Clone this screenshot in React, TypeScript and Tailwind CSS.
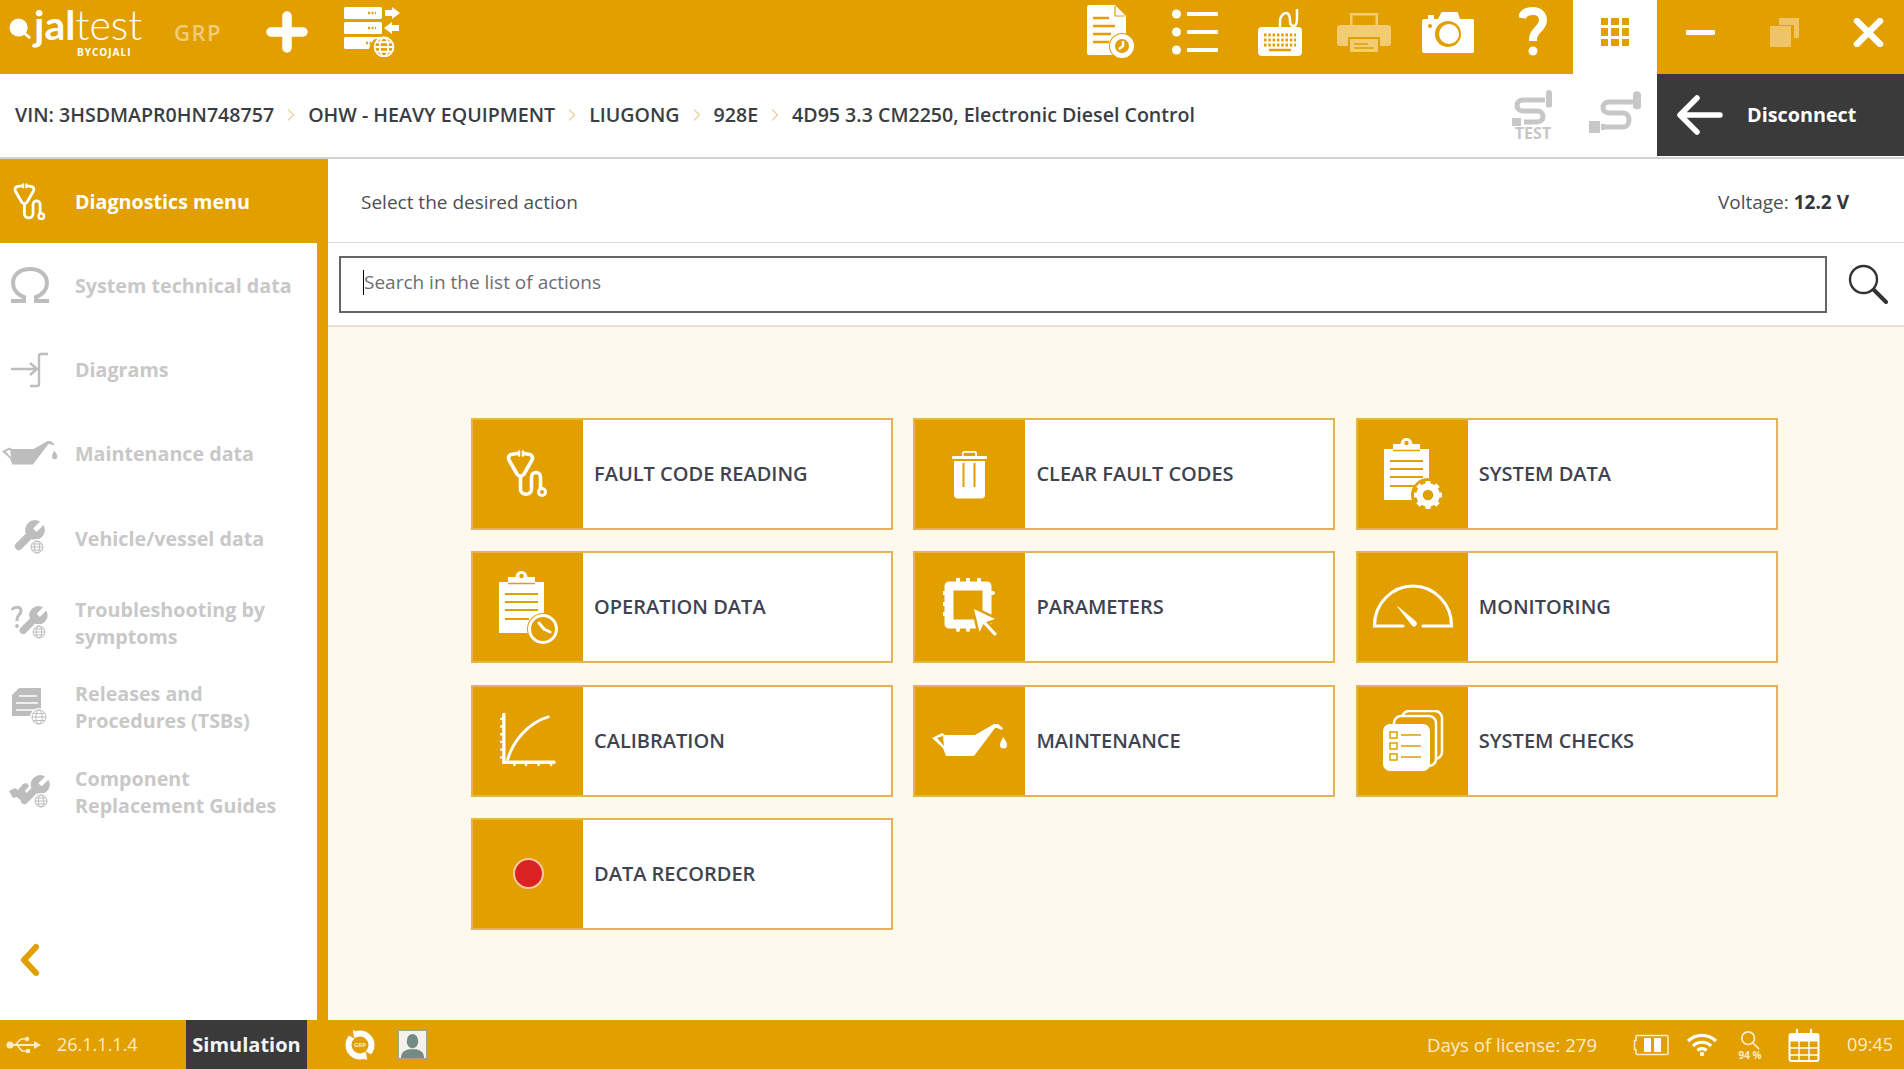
import type { ReactNode } from "react";
import { ChevronRight } from "lucide-react";

const WRENCH =
  "M14.7 6.3a1 1 0 0 0 0 1.4l1.6 1.6a1 1 0 0 0 1.4 0l3.77-3.77a6 6 0 0 1-7.94 7.94l-6.91 6.91a2.12 2.12 0 0 1-3-3l6.91-6.91a6 6 0 0 1 7.94-7.94l-3.76 3.76z";

function Globe({ cx, cy, r, sw = 1 }: { cx: number; cy: number; r: number; sw?: number }) {
  return (
    <g fill="none" stroke="currentColor" strokeWidth={sw}>
      <circle cx={cx} cy={cy} r={r} />
      <ellipse cx={cx} cy={cy} rx={r * 0.45} ry={r} />
      <path d={`M${cx - r} ${cy}h${2 * r}M${cx - r * 0.85} ${cy - r * 0.5}h${1.7 * r}M${cx - r * 0.85} ${cy + r * 0.5}h${1.7 * r}`} />
    </g>
  );
}

function Stethoscope({ className }: { className?: string }) {
  return (
    <svg viewBox="0 0 42 48" className={className} fill="none" stroke="currentColor" strokeWidth="3.600" strokeLinecap="round" strokeLinejoin="round">
      <path d="M11 3.500 5 4.500C2.500 5.500 2 8 3 10l8 14c2 3 5 3 7 0l8-14c1-2 .5-4.500-2-5.500l-6-1" />
      <path d="M14.500 26v13c0 7 11 7 11 0V27c0-6 9-6 9 0v11" />
      <circle cx="36" cy="42" r="3.500" strokeWidth="3" />
      <path d="M13 1.500v4M17 1.500v4" strokeWidth="2.500" />
    </svg>
  );
}

function Trash({ className }: { className?: string }) {
  return (
    <svg viewBox="0 0 35 49" className={className} fill="currentColor">
      <path d="M10 6V3.500C10 2 11 1 12.500 1h10C24 1 25 2 25 3.500V6h-1.800V3.500c0-.5-.3-.8-.8-.8h-10c-.5 0-.8.3-.8.8V6z" />
      <rect x="0" y="6" width="35" height="3" rx="1" />
      <path d="M2 11h31v34c0 2-1.500 3.500-3.500 3.500h-24C3.500 48.500 2 47 2 45z" />
      <path d="M11.500 13v24M22.500 13v24" stroke="#e19f00" strokeWidth="2" />
    </svg>
  );
}

function Clipboard({ className, badge }: { className?: string; badge: "clock" | "gear" }) {
  return (
    <svg viewBox="0 0 60 74" className={className}>
      <path fill="currentColor" d="M0 12h9V7h7.500C17 3 19.500 1 22.500 1s5.500 2 6 6H36v5h9v51H0z" />
      <circle cx="22.500" cy="6" r="2.200" fill="#e19f00" />
      <path d="M9 13.500h27" stroke="#e19f00" strokeWidth="1.500" />
      <path d="M6 24h33M6 32h33M6 40h33M6 49h24" stroke="#e19f00" strokeWidth="1.800" />
      {badge === "clock" ? (
        <g>
          <circle cx="44" cy="59" r="16" fill="#e19f00" />
          <circle cx="44" cy="59" r="13.500" fill="none" stroke="currentColor" strokeWidth="3" />
          <path d="M40 53l5 6 6 3" fill="none" stroke="currentColor" strokeWidth="3" strokeLinecap="round" />
        </g>
      ) : (
        <g>
          <circle cx="44" cy="58" r="17" fill="#e19f00" />
          <circle cx="44" cy="58" r="8.500" fill="none" stroke="currentColor" strokeWidth="6.500" />
          <path d="M44 44v6M44 66v6M30 58h6M52 58h6M34 48l4 4M50 64l4 4M54 48l-4 4M38 64l-4 4" stroke="currentColor" strokeWidth="5" />
        </g>
      )}
    </svg>
  );
}

function Chip({ className }: { className?: string }) {
  return (
    <svg viewBox="0 0 54 58" className={className} fill="none" stroke="currentColor">
      <path d="M6 8h38v38H6z" strokeWidth="9" strokeLinejoin="round" />
      <path d="M15 0v8M25 0v8M36 0v8M0 15h8M0 26h8M0 36h8M42 15h8M15 46v6M25 46v6" strokeWidth="4" strokeLinecap="round" />
      <path d="M31 31l21 10-9 3 11 12-2.500 2-11-12-4 8z" fill="#e19f00" stroke="#e19f00" strokeWidth="5" />
      <path d="M31 31l21 10-9 3 11 12-2.500 2-11-12-4 8z" fill="currentColor" stroke="none" />
    </svg>
  );
}

function Gauge({ className }: { className?: string }) {
  return (
    <svg viewBox="0 0 82 46" className={className} fill="none" stroke="currentColor" strokeWidth="3.200" strokeLinecap="round">
      <path d="M31 42H2.500C2 20 20 2 41 2s39 18 38.500 40H51" />
      <path d="M26 23l14 18c2 3 6 0 4-3z" fill="currentColor" strokeWidth="1" strokeLinejoin="round" />
    </svg>
  );
}

function Curve({ className }: { className?: string }) {
  return (
    <svg viewBox="0 0 56 58" className={className} fill="none" stroke="currentColor" strokeWidth="2.600" strokeLinecap="round">
      <path d="M3 1v50h52" strokeWidth="3.400" />
      <path d="M0 6h3M0 14h3M0 22h3M0 30h3M0 38h3M0 46h3M14 51v3M26 51v3M39 51v3M52 51v3" strokeWidth="2.400" />
      <path d="M7 48C12 30 28 10 49 4" strokeWidth="3" />
    </svg>
  );
}

function OilCan({ className }: { className?: string }) {
  return (
    <svg viewBox="0 0 76 34" className={className} fill="currentColor">
      <path
        fillRule="evenodd"
        d="M0 14l10-5 3 2h30L62 0h4l5 4-1 2-5-2-2 0-21 28H14l-3-8zM5 14l7 8-1-10z"
      />
      <path d="M71 13c2 3 4 5 4 8a3.500 3.500 0 0 1-7 0c0-3 2-5 3-8z" />
    </svg>
  );
}

function Checks({ className }: { className?: string }) {
  return (
    <svg viewBox="0 0 62 62" className={className}>
      <rect x="20" y="1" width="40" height="48" rx="7" fill="none" stroke="currentColor" strokeWidth="2.500" />
      <rect x="12" y="6" width="42" height="50" rx="7" fill="#e19f00" stroke="currentColor" strokeWidth="2.500" />
      <rect x="1" y="14" width="47" height="47" rx="7" fill="currentColor" />
      <g fill="none" stroke="#e19f00" strokeWidth="1.500">
        <path d="M8 22h7v6H8zM8 33h7v6H8zM8 44h7v6H8zM19 25h20M19 36h20M19 47h20" />
      </g>
    </svg>
  );
}

// top bar icons
function DocClock() {
  return (
    <svg viewBox="0 0 48 54" className="w-[48px] h-[54px] text-white">
      <path fill="currentColor" d="M0 2C0 1 1 0 2 0h26l11 11v39H2c-1 0-2-1-2-2z" />
      <path d="M6 13h16M6 21h22M6 29h18M6 37h16" stroke="#e19f00" strokeWidth="2.500" />
      <path d="M28 1v10h10" fill="none" stroke="#e19f00" strokeWidth="1.200" />
      <circle cx="35" cy="41" r="13" fill="#e19f00" />
      <circle cx="35" cy="41" r="9.500" fill="none" stroke="currentColor" strokeWidth="5" />
      <path d="M36 36v5l-4 3" stroke="currentColor" strokeWidth="2.500" fill="none" />
    </svg>
  );
}

function ListIcon() {
  return (
    <svg viewBox="0 0 46 46" className="w-[46px] h-[46px]" fill="white">
      <circle cx="4.500" cy="5" r="4.500" />
      <circle cx="4.500" cy="23" r="4.500" />
      <circle cx="4.500" cy="41" r="4.500" />
      <rect x="15" y="3" width="31" height="4" rx="1" />
      <rect x="15" y="21" width="31" height="4" rx="1" />
      <rect x="15" y="39" width="31" height="4" rx="1" />
    </svg>
  );
}

function KeyboardIcon() {
  return (
    <svg viewBox="0 0 44 48" className="w-[44px] h-[48px]">
      <rect x="0" y="19" width="44" height="29" rx="4" fill="white" />
      <path d="M22 19v-6c0-4 3-8 6-8s4 4 4 8 2 5 4 5 3-4 3-8V1" fill="none" stroke="white" strokeWidth="2.500" />
      <path d="M6 27h32M6 32h32M6 37h32" stroke="#e19f00" strokeWidth="3" strokeDasharray="2.500 1.800" />
      <path d="M11 42h22" stroke="#e19f00" strokeWidth="2.500" />
    </svg>
  );
}

function PrinterIcon() {
  return (
    <svg viewBox="0 0 54 40" className="w-[54px] h-[40px] text-[#f2cb75]" fill="currentColor">
      <path d="M13 13V1h28v12h-2.500V3.500h-23V13z" />
      <path d="M0 16c0-2 1-3 3-3h48c2 0 3 1 3 3v15c0 2-1 3-3 3h-8v-9H11v9H3c-2 0-3-1-3-3z" />
      <path d="M13 27h28v13H13z" />
      <path d="M17 32h14M17 36h20" stroke="#e19f00" strokeWidth="1.500" />
    </svg>
  );
}

function CameraIcon() {
  return (
    <svg viewBox="0 0 52 41" className="w-[52px] h-[41px]">
      <path fill="white" d="M2 7h4V3h6v4h4l3-6c.3-.6 1-1 2-1h13c1 0 1.700.4 2 1l2 6h12c2 0 4 1.500 4 4v26c0 2-2 4-4 4H2c-1 0-2-1-2-2V9c0-1 1-2 2-2z" />
      <circle cx="26" cy="22" r="13" fill="#e19f00" />
      <circle cx="27" cy="22" r="10" fill="white" />
      <circle cx="8" cy="14" r="2" fill="#e19f00" />
    </svg>
  );
}

function QuestionIcon() {
  return (
    <svg viewBox="0 0 28 50" className="w-[28px] h-[50px]" fill="none" stroke="white" strokeWidth="8">
      <path d="M3 11C4 6 8 4 14 4c6 0 10 4 10 9 0 9-10 10-10 19v2" />
      <circle cx="14" cy="44" r="2.500" fill="white" strokeWidth="4" />
    </svg>
  );
}

function GridIcon() {
  const cells = Array.from({ length: 9 }, (_, i) => i);
  return (
    <div className="grid grid-cols-3 gap-[3px] w-[29px]">
      {cells.map((i) => (
        <div key={i} className="h-[7.500px] bg-[#e19f00]" />
      ))}
    </div>
  );
}

function RestoreIcon() {
  return (
    <svg viewBox="0 0 29 29" className="w-[29px] h-[29px] text-[#efc469]" fill="currentColor">
      <path d="M9 0h20v20h-5V7H9z" />
      <path d="M0 8h21v21H0z" />
    </svg>
  );
}

function CloseIcon() {
  return (
    <svg viewBox="0 0 31 29" className="w-[31px] h-[29px]" stroke="white" strokeWidth="6.500" strokeLinecap="round">
      <path d="M4 3l23 23M27 3L4 26" />
    </svg>
  );
}

function PlusIcon() {
  return (
    <svg viewBox="0 0 42 42" className="w-[42px] h-[42px]" stroke="white" strokeWidth="9.500" strokeLinecap="round">
      <path d="M21 5v32M5 21h32" />
    </svg>
  );
}

function ServerIcon() {
  return (
    <svg viewBox="0 0 56 50" className="w-[56px] h-[50px] text-white" fill="currentColor">
      <rect x="0" y="0" width="38" height="12" rx="1.500" />
      <rect x="0" y="15" width="38" height="12" rx="1.500" />
      <path d="M0 31.500C0 30.500 1 30 1.500 30h36.500v2H31c-3 2-5 5-6 10H1.500C.5 42 0 41 0 40.500z" />
      <path d="M24 6h8M24 21h8M22 36h5" stroke="#e19f00" strokeWidth="2.500" strokeDasharray="2 1.500" />
      <path d="M41 3h7V0l8 6-8 6V9h-7z" />
      <path d="M55 18h-7v-3l-8 6 8 6v-3h7z" />
      <Globe cx={40} cy={40} r={9.500} sw={1.800} />
    </svg>
  );
}

function TestIcon() {
  return (
    <div className="flex flex-col items-center text-[#c7c7c7]">
      <svg viewBox="0 0 44 36" className="w-[44px] h-[36px]">
        <path d="M34 10H12C4 10 4 21 12 21h14c8 0 8 11 0 11H13" fill="none" stroke="currentColor" strokeWidth="5" />
        <path d="M35 3c0-4 6-4 6 0v13c0 2-6 2-6 0z" fill="currentColor" />
        <rect x="1" y="28" width="9" height="8" fill="currentColor" />
      </svg>
      <span className="text-[16px] leading-[14px] font-bold">TEST</span>
    </div>
  );
}

function CableIcon() {
  return (
    <svg viewBox="0 0 52 44" className="w-[52px] h-[44px] text-[#c7c7c7]">
      <path d="M44 11H20c-8 0-8 11 0 11h14c8 0 8 14 0 14H16" fill="none" stroke="currentColor" strokeWidth="5" />
      <path d="M44 4c0-5 8-5 8 0v12c0 3-8 3-8 0z" fill="currentColor" />
      <rect x="0" y="30" width="11" height="12" fill="currentColor" />
      <rect x="12" y="33" width="4" height="6" fill="currentColor" />
    </svg>
  );
}

function BackArrow({ className }: { className?: string }) {
  return (
    <svg viewBox="0 0 46 40" className={className} fill="none" stroke="white" strokeWidth="5.500" strokeLinecap="round" strokeLinejoin="round">
      <path d="M20 3L3 20l17 17M4 20h39" />
    </svg>
  );
}

function SearchIcon() {
  return (
    <svg viewBox="0 0 40 40" className="w-[40px] h-[40px]" fill="none" stroke="#333">
      <circle cx="15.500" cy="15.500" r="13.500" strokeWidth="2.400" />
      <path d="M26 26l12 12" strokeWidth="4" strokeLinecap="round" />
    </svg>
  );
}

// sidebar icons
function Omega() {
  return (
    <svg viewBox="0 0 40 36" className="w-[40px] h-[36px]" fill="none" stroke="currentColor" strokeWidth="4">
      <path d="M1 34h13v-4C6 27 3 21 3 16 3 7 11 2 20 2s17 5 17 14c0 5-3 11-11 14v4h13" />
    </svg>
  );
}

function DiagramIcon() {
  return (
    <svg viewBox="0 0 38 36" className="w-[38px] h-[36px]" fill="none" stroke="currentColor" strokeWidth="2.400">
      <path d="M0 17h26M19 11l7 6-7 6M37 2h-7c-1.500 0-2 1-2 2v28c0 1-.5 2-2 2h-7" />
    </svg>
  );
}

function WrenchGlobe() {
  return (
    <svg viewBox="0 0 38 38" className="w-[38px] h-[38px]">
      <g transform="translate(0 -1) scale(1.500)">
        <path d={WRENCH} fill="currentColor" stroke="currentColor" />
      </g>
      <circle cx="26" cy="28" r="8" fill="white" />
      <Globe cx={26} cy={28} r={6} />
    </svg>
  );
}

function QuestionWrench() {
  return (
    <svg viewBox="0 0 40 38" className="w-[40px] h-[38px]">
      <g transform="translate(6 0) scale(1.400)">
        <path d={WRENCH} fill="currentColor" stroke="currentColor" />
      </g>
      <path d="M2 6c1-3 8-4 9 0 1 4-4 5-4 9v2" fill="none" stroke="currentColor" strokeWidth="3" />
      <circle cx="7" cy="22" r="1.900" fill="currentColor" />
      <circle cx="29" cy="28" r="8" fill="white" />
      <Globe cx={29} cy={28} r={6} />
    </svg>
  );
}

function ReleaseIcon() {
  return (
    <svg viewBox="0 0 38 40" className="w-[38px] h-[40px]">
      <path d="M8 1h22v28H1V8z" fill="currentColor" />
      <path d="M8 9h18M5 16h22M5 23h18" stroke="white" strokeWidth="1.500" />
      <circle cx="28" cy="30" r="9" fill="white" />
      <Globe cx={28} cy={30} r={7} />
    </svg>
  );
}

function ComponentWrench() {
  return (
    <svg viewBox="0 0 44 38" className="w-[44px] h-[38px]">
      <g transform="translate(9 0) scale(1.450)">
        <path d={WRENCH} fill="currentColor" stroke="currentColor" />
      </g>
      <path d="M1 18l6-3 3 2 5-6 4-1 2 3-4 5 2 3-7 6-3-3-4 1z" fill="currentColor" />
      <circle cx="33" cy="28" r="8" fill="white" />
      <Globe cx={33} cy={28} r={6} />
    </svg>
  );
}

// status bar icons
function UsbIcon() {
  return (
    <svg viewBox="0 0 36 18" className="w-[36px] h-[18px] text-[#fdecc8]" fill="currentColor">
      <circle cx="4" cy="9" r="3.500" />
      <path d="M4 8h24v2H4z" />
      <path d="M28 5l7 4-7 4z" />
      <path d="M9 9l6-6h5" fill="none" stroke="currentColor" strokeWidth="1.600" />
      <path d="M11 9l5 6h5" fill="none" stroke="currentColor" strokeWidth="1.600" />
      <circle cx="21" cy="3" r="2.200" />
      <rect x="20" y="13" width="4" height="4" />
    </svg>
  );
}

function SyncIcon() {
  return (
    <svg viewBox="0 0 30 32" className="w-[30px] h-[32px]">
      <circle cx="15" cy="16" r="11.500" fill="none" stroke="white" strokeWidth="6" />
      <path d="M3 6l8-4-1 8zM27 26l-8 4 1-8z" fill="#e19f00" />
      <path d="M8 1l8 3-7 5zM22 31l-8-3 7-5z" fill="white" />
      <text x="15" y="18" textAnchor="middle" fontSize="6" fontWeight="700" fill="#fdecc8" fontFamily="'Open Sans', sans-serif">
        GRP
      </text>
    </svg>
  );
}

function UserIcon() {
  return (
    <div className="w-[31px] h-[31px] border-2 border-[#a8a08a] bg-[#f3f1ea] flex items-end justify-center overflow-hidden">
      <svg viewBox="0 0 24 26" className="w-[23px] h-[25px]" fill="#748a85">
        <ellipse cx="12" cy="8.500" rx="6" ry="7.500" />
        <path d="M0 26c0-6 4-8 8-9h8c4 1 8 3 8 9z" />
      </svg>
    </div>
  );
}

function BatteryIcon() {
  return (
    <svg viewBox="0 0 36 22" className="w-[36px] h-[22px]" fill="none" stroke="#fdecc8">
      <path d="M4 1.500h30c.5 0 1 .5 1 1v17c0 .5-.5 1-1 1H4c-.5 0-1-.5-1-1v-4H1.500v-9H3v-4c0-.5.5-1 1-1z" strokeWidth="1.500" />
      <rect x="11" y="4" width="7" height="14" fill="white" stroke="none" />
      <rect x="21" y="4" width="7" height="14" fill="white" stroke="none" />
    </svg>
  );
}

function WifiIcon() {
  return (
    <svg viewBox="0 0 32 24" className="w-[32px] h-[24px]" fill="none" stroke="white" strokeWidth="3.200">
      <path d="M2 8c8-7.500 20-7.500 28 0M7 13c5-5 13-5 18 0M11.500 17.500c2.500-2.500 6.500-2.500 9 0" />
      <circle cx="16" cy="21" r="2.200" fill="white" stroke="none" />
    </svg>
  );
}

function CalendarIcon() {
  return (
    <svg viewBox="0 0 32 34" className="w-[32px] h-[34px]" fill="none" stroke="white">
      <rect x="1.500" y="6" width="29" height="27" rx="2" strokeWidth="2" />
      <path d="M1.500 7h29v6h-29z" fill="white" strokeWidth="1" />
      <path d="M9 1v9M23 1v9" strokeWidth="2.200" />
      <path d="M1.500 20h29M1.500 27h29M11 13v20M21 13v20" strokeWidth="1.400" />
    </svg>
  );
}

type Action = { label: string; icon: ReactNode };

const ACTIONS: Action[] = [
  { label: "FAULT CODE READING", icon: <Stethoscope className="w-[42px] h-[48px] text-white mr-[2px]" /> },
  { label: "CLEAR FAULT CODES", icon: <Trash className="w-[35px] h-[49px] text-white mr-[2px]" /> },
  { label: "SYSTEM DATA", icon: <Clipboard badge="gear" className="w-[60px] h-[74px] text-white ml-[2px]" /> },
  { label: "OPERATION DATA", icon: <Clipboard badge="clock" className="w-[60px] h-[74px] text-white ml-[2px]" /> },
  { label: "PARAMETERS", icon: <Chip className="w-[54px] h-[58px] text-white" /> },
  { label: "MONITORING", icon: <Gauge className="w-[82px] h-[46px] text-white" /> },
  { label: "CALIBRATION", icon: <Curve className="w-[56px] h-[56px] text-white" /> },
  { label: "MAINTENANCE", icon: <OilCan className="w-[76px] h-[34px] text-white" /> },
  { label: "SYSTEM CHECKS", icon: <Checks className="w-[62px] h-[62px] text-white" /> },
  {
    label: "DATA RECORDER",
    icon: <div className="size-[31px] rounded-full bg-[#db2222] border-2 border-[#f6c9a0]" />,
  },
];

const SIDE_ITEMS: { label: ReactNode; icon: ReactNode }[] = [
  { label: "System technical data", icon: <Omega /> },
  { label: "Diagrams", icon: <DiagramIcon /> },
  { label: "Maintenance data", icon: <OilCan className="w-[56px] h-[25px]" /> },
  { label: "Vehicle/vessel data", icon: <WrenchGlobe /> },
  { label: <>Troubleshooting by<br />symptoms</>, icon: <QuestionWrench /> },
  { label: <>Releases and<br />Procedures (TSBs)</>, icon: <ReleaseIcon /> },
  { label: <>Component<br />Replacement Guides</>, icon: <ComponentWrench /> },
];

const CRUMBS = ["OHW - HEAVY EQUIPMENT", "LIUGONG", "928E", "4D95 3.3 CM2250, Electronic Diesel Control"];

function TopCell({ children }: { children: ReactNode }) {
  return <div className="w-[84.400px] h-full flex items-center justify-center pb-[10px] pl-[4px]">{children}</div>;
}

function WinCell({ children }: { children: ReactNode }) {
  return <div className="w-[82px] flex items-center justify-center pb-[10px] shrink-0">{children}</div>;
}

function ActionCard({ label, icon }: Action) {
  return (
    <button className="flex h-[112px] border-2 border-[#e5b355] bg-white text-left">
      <span className="w-[110px] h-full bg-[#e19f00] flex items-center justify-center shrink-0">{icon}</span>
      <span className="pl-[11px] self-center text-[20px] font-semibold text-[#3f4350]">{label}</span>
    </button>
  );
}

export default function App() {
  return (
    <div className="w-[1904px] h-[1069px] flex flex-col overflow-hidden bg-white font-['Open_Sans',sans-serif]">
      <header className="h-[74px] shrink-0 flex bg-[#e19f00]">
        <div className="w-[174px] pl-[9px] pt-[6px] text-white">
          <div className="flex items-center font-['Lato',sans-serif] text-[41px] leading-[38px]">
            <svg viewBox="0 0 24 22" className="w-[23px] h-[21px] mt-[6px]" fill="white">
              <circle cx="10" cy="10" r="9.500" />
              <path d="M15 15l7 6" stroke="white" strokeWidth="3" />
            </svg>
            <span className="font-bold ml-[2px]">jal</span>
            <span className="font-light">test</span>
          </div>
          <div className="pl-[68px] mt-[2px] text-[10px] leading-[12px] tracking-[1px] font-bold">BYCOJALI</div>
        </div>
        <div className="w-[62px] flex items-center pb-[10px] text-[22px] font-semibold tracking-[1.500px] text-[#f2cb75]">GRP</div>
        <div className="w-[72px] flex items-center justify-end pb-[10px]">
          <PlusIcon />
        </div>
        <div className="ml-[36px] flex items-center pb-[10px]">
          <ServerIcon />
        </div>
        <div className="ml-auto flex h-full">
          <TopCell><DocClock /></TopCell>
          <TopCell><ListIcon /></TopCell>
          <TopCell><KeyboardIcon /></TopCell>
          <TopCell><PrinterIcon /></TopCell>
          <TopCell><CameraIcon /></TopCell>
          <TopCell><QuestionIcon /></TopCell>
        </div>
        <div className="w-[84px] bg-white flex items-center justify-center pb-[10px]">
          <GridIcon />
        </div>
        <div className="w-[247px] flex pl-[2px] gap-[2px]">
          <WinCell>
            <div className="w-[29px] h-[5px] rounded-[1px] bg-white" />
          </WinCell>
          <WinCell><RestoreIcon /></WinCell>
          <WinCell><CloseIcon /></WinCell>
        </div>
      </header>

      <div className="h-[85px] shrink-0 flex items-start border-b-2 border-[#d2d2d2]">
        <div className="h-[82px] pl-[15px] flex flex-1 items-center text-[19.600px] font-semibold text-[#3a3d42]">
          <span>VIN: 3HSDMAPR0HN748757</span>
          {CRUMBS.map((crumb) => (
            <span key={crumb} className="flex items-center">
              <ChevronRight className="size-[20px] mx-[7px] text-[#edd29a]" strokeWidth={1.500} />
              <span>{crumb}</span>
            </span>
          ))}
        </div>
        <div className="h-[82px] w-[84px] flex items-center justify-center pl-[4px]">
          <TestIcon />
        </div>
        <div className="h-[82px] w-[84px] flex items-center justify-center -mt-[2px]">
          <CableIcon />
        </div>
        <div className="h-[82px] w-[247px] bg-[#3a3a3a] flex items-center pl-[20px] text-white">
          <BackArrow className="w-[46px] h-[40px]" />
          <span className="ml-[24px] text-[19.800px] font-bold">Disconnect</span>
        </div>
      </div>

      <div className="flex-1 min-h-0 flex">
        <aside className="w-[328px] shrink-0 flex flex-col">
          <div className="h-[84px] shrink-0 bg-[#e19f00] flex items-center pt-[2px] text-white">
            <span className="w-[75px] flex justify-center pr-[17px]">
              <Stethoscope className="w-[33px] h-[38px]" />
            </span>
            <span className="text-[19.700px] font-bold">Diagnostics menu</span>
          </div>
          <nav className="flex-1 flex flex-col bg-white border-r-[11px] border-[#e19f00] text-[#c8c8c8]">
            {SIDE_ITEMS.map((item, i) => (
              <div key={i} className="h-[84.400px] shrink-0 flex items-center">
                <span className="w-[75px] shrink-0 flex justify-center pr-[15px] text-[#bdbdbd]">{item.icon}</span>
                <span className="text-[19.700px] leading-[27px] font-bold">{item.label}</span>
              </div>
            ))}
            <svg viewBox="0 0 20 34" className="mt-auto mb-[43px] ml-[20px] w-[20px] h-[34px]" fill="none" stroke="#e19f00" strokeWidth="6" strokeLinecap="round" strokeLinejoin="round">
              <path d="M16 4L4 17l12 13" />
            </svg>
          </nav>
        </aside>

        <main className="flex-1 min-w-0 flex flex-col">
          <div className="h-[84px] shrink-0 flex items-center justify-between pl-[33px] pr-[55px] pt-[3px] border-b border-[#d9d9d9] text-[19px] text-[#4b4f55]">
            <span>Select the desired action</span>
            <span>
              Voltage: <b className="font-bold text-[#33363b]">12.2 V</b>
            </span>
          </div>
          <div className="h-[84px] shrink-0 flex items-center pl-[11px] border-b-2 border-[#e4e0d6]">
            <div className="w-[1488px] h-[57px] border-2 border-[#666] flex items-center pl-[22px] pb-[4px]">
              <span className="w-px h-[25px] bg-black" />
              <input
                placeholder="Search in the list of actions"
                className="flex-1 outline-none text-[19px] placeholder:text-[#6a6e73]"
              />
            </div>
            <div className="ml-[21px]">
              <SearchIcon />
            </div>
          </div>
          <div className="flex-1 bg-[#fef9ee] pl-[143px] pt-[91px]">
            <div className="grid grid-cols-[repeat(3,422px)] gap-x-[20.400px] gap-y-[21.300px]">
              {ACTIONS.map((action) => (
                <ActionCard key={action.label} {...action} />
              ))}
            </div>
          </div>
        </main>
      </div>

      <footer className="h-[49px] shrink-0 flex items-center bg-[#e19f00] text-[18px] text-[#fdecc8]">
        <div className="ml-[6px]">
          <UsbIcon />
        </div>
        <span className="ml-[15px] w-[129px]">26.1.1.1.4</span>
        <div className="h-full w-[121px] bg-[#3a3a3a] flex items-center justify-center text-[20px] font-bold text-[#f4f4f4]">
          Simulation
        </div>
        <div className="ml-[38px]">
          <SyncIcon />
        </div>
        <div className="ml-[22px]">
          <UserIcon />
        </div>
        <span className="ml-auto text-[18.600px]">Days of license: 279</span>
        <div className="ml-[36px]">
          <BatteryIcon />
        </div>
        <div className="ml-[17px]">
          <WifiIcon />
        </div>
        <div className="ml-[17px] w-[30px] flex flex-col items-center">
          <svg viewBox="0 0 22 22" className="w-[20px] h-[20px]" fill="none" stroke="#fdecc8" strokeWidth="1.800">
            <circle cx="9" cy="9" r="7" />
            <path d="M14 14l7 7" />
          </svg>
          <span className="text-[10px] leading-[10px] font-bold">94 %</span>
        </div>
        <div className="ml-[23px]">
          <CalendarIcon />
        </div>
        <span className="ml-[27px] mr-[11px]">09:45</span>
      </footer>
    </div>
  );
}
